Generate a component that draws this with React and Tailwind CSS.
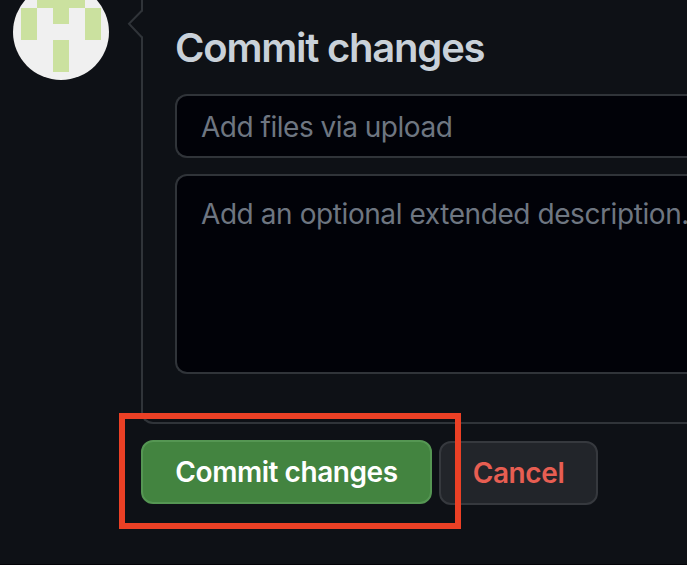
function Avatar() {
  return (
    <svg className="-mt-4 ml-[13px] block size-24 shrink-0" viewBox="0 0 96 96">
      <circle cx="48" cy="48" r="48" fill="#f0f0f0" />
      <g fill="#cbe19f">
        <rect x="24" y="8" width="48" height="16" />
        <rect x="8" y="24" width="16" height="32" />
        <rect x="40" y="24" width="16" height="16" />
        <rect x="72" y="24" width="16" height="32" />
        <rect x="40" y="56" width="16" height="32" />
      </g>
    </svg>
  );
}

export default function App() {
  return (
    <div className="flex h-[565px] w-[687px] overflow-hidden border-b border-[#020307] bg-[#0e1116] font-['Inter',sans-serif]">
      <aside className="w-[141px] shrink-0">
        <Avatar />
      </aside>
      <main className="min-w-0 flex-1">
        <section className="relative h-[424px] rounded-bl-xl border-b-2 border-l-2 border-[#303439] pl-8">
          <svg className="absolute top-[9px] -left-4 h-[30px] w-4" viewBox="0 0 16 30" fill="none">
            <path d="M14 2.5h2v25h-2z" fill="#0e1116" />
            <path d="M15 1.5L2 14.8L15 28.5" stroke="#303439" strokeWidth="2" />
          </svg>
          <h2 className="h-[94px] pt-6 text-[40px] leading-[48px] font-semibold tracking-[-1.22px] whitespace-nowrap text-[#c9d1d9]">
            Commit changes
          </h2>
          <div className="h-16 rounded-l-xl border-2 border-r-0 border-[#303439] bg-[#010208] pt-[11px] pl-6 text-[28px] leading-10 tracking-[-0.48px] whitespace-nowrap text-[#6e7681]">
            Add files via upload
          </div>
          <div className="mt-4 h-[200px] overflow-hidden rounded-l-xl border-2 border-r-0 border-[#303439] bg-[#010208] pt-[18px] pl-6 text-[28px] leading-10 tracking-[-0.42px] whitespace-nowrap text-[#6e7681]">
            Add an optional extended description.
          </div>
        </section>
        <div className="relative flex gap-2 pt-4">
          <button className="h-16 w-[291px] rounded-xl border-2 border-[#559653] bg-[#438440] text-[28px] font-semibold tracking-[-0.44px] whitespace-nowrap text-white">
            Commit changes
          </button>
          <button className="mt-px -ml-px h-16 w-[159px] rounded-xl border-2 border-[#36393e] bg-[#22252a] text-[28px] font-semibold tracking-[-0.4px] whitespace-nowrap text-[#e75e52]">
            Cancel
          </button>
          <div className="absolute -top-[11px] -left-[22px] h-[116px] w-[342px] border-6 border-[#eb4025]" />
        </div>
      </main>
    </div>
  );
}
